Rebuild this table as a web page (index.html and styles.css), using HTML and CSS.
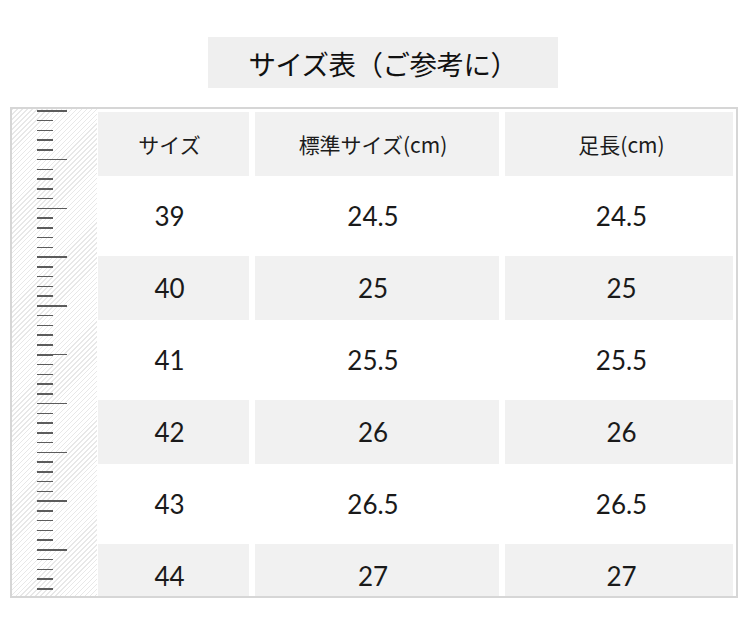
FILE: index.html
```html
<!DOCTYPE html>
<html lang="ja">
<head>
<meta charset="utf-8">
<title>サイズ表</title>
<link rel="stylesheet" href="styles.css">
</head>
<body>
  <div class="title">サイズ表（ご参考に）</div>
  <div class="frame">
    <div class="ruler"></div>
    <div class="table">
      <div class="cell head c1">サイズ</div>
      <div class="cell head c2">標準サイズ(cm)</div>
      <div class="cell head c3">足長(cm)</div>

      <div class="cell num c1">39</div>
      <div class="cell num c2">24.5</div>
      <div class="cell num c3">24.5</div>

      <div class="cell num gray c1">40</div>
      <div class="cell num gray c2">25</div>
      <div class="cell num gray c3">25</div>

      <div class="cell num c1">41</div>
      <div class="cell num c2">25.5</div>
      <div class="cell num c3">25.5</div>

      <div class="cell num gray c1">42</div>
      <div class="cell num gray c2">26</div>
      <div class="cell num gray c3">26</div>

      <div class="cell num c1">43</div>
      <div class="cell num c2">26.5</div>
      <div class="cell num c3">26.5</div>

      <div class="cell num gray c1">44</div>
      <div class="cell num gray c2">27</div>
      <div class="cell num gray c3">27</div>
    </div>
  </div>
</body>
</html>
```

FILE: styles.css
```css
html, body {
  margin: 0;
  padding: 0;
  background: #ffffff;
}

body {
  width: 750px;
  height: 634px;
  overflow: hidden;
  padding-top: 37px;
  box-sizing: border-box;
  font-family: "Noto Sans CJK JP", "Noto Sans", sans-serif;
  color: #1a1a1a;
}

.title {
  margin-left: 208px;
  width: 350px;
  height: 51px;
  background: #efefef;
  display: flex;
  align-items: center;
  justify-content: center;
  font-size: 27.5px;
  color: #111111;
  letter-spacing: -0.5px;
}

.frame {
  margin-top: 19px;
  margin-left: 10px;
  width: 728px;
  height: 491px;
  box-sizing: border-box;
  border: 2px solid #d6d6d6;
  display: flex;
  overflow: hidden;
}

.ruler {
  flex: 0 0 85px;
  height: 100%;
  background:
    repeating-linear-gradient(to bottom, #5c5c5c 0 1.5px, transparent 1.5px 48.8px) 25px 1px / 30px 100% no-repeat,
    repeating-linear-gradient(to bottom, #5c5c5c 0 1.5px, transparent 1.5px 9.76px) 25px 1px / 16px 100% no-repeat,
    repeating-linear-gradient(135deg, #e8e8e8 0 1px, #ffffff 1px 3.5px);
}

.table {
  margin-left: 1px;
  padding-top: 3px;
  display: grid;
  grid-template-columns: 151px 244px 228px;
  grid-auto-rows: 64px;
  column-gap: 6px;
  row-gap: 8px;
  align-content: start;
}

.cell {
  display: flex;
  align-items: center;
  justify-content: center;
}

.c1 {
  padding-right: 8px;
}

.c2 {
  padding-right: 8px;
}

.c3 {
  padding-left: 5px;
}

.head {
  background: #f1f1f1;
  font-size: 21px;
  color: #1c1c1c;
}

.gray {
  background: #f1f1f1;
}

.num {
  font-family: "Lato", "Liberation Sans", sans-serif;
  font-size: 26px;
  color: #1a1a1a;
}
```
